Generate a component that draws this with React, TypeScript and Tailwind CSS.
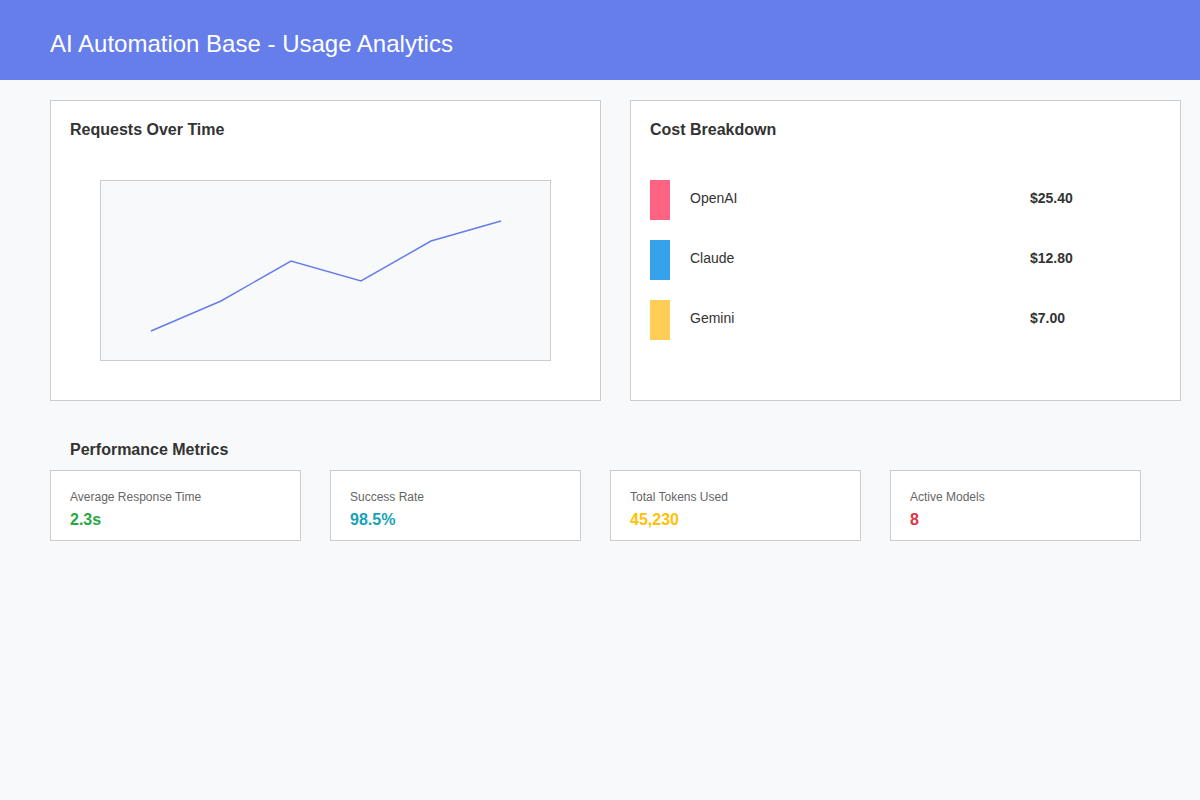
export default function App() {
    const points = [
        [50, 150],
        [120, 120],
        [190, 80],
        [260, 100],
        [330, 60],
        [400, 40],
    ]

    const costs = [
        { name: 'OpenAI', amount: '$25.40', color: 'bg-[#ff6384]' },
        { name: 'Claude', amount: '$12.80', color: 'bg-[#36a2eb]' },
        { name: 'Gemini', amount: '$7.00', color: 'bg-[#ffce56]' },
    ]

    const metrics = [
        { label: 'Average Response Time', value: '2.3s', color: 'text-[#28a745]' },
        { label: 'Success Rate', value: '98.5%', color: 'text-[#17a2b8]' },
        { label: 'Total Tokens Used', value: '45,230', color: 'text-[#ffc107]' },
        { label: 'Active Models', value: '8', color: 'text-[#dc3545]' },
    ]

    return (
        <div className="min-h-[800px] bg-[#f8f9fa] font-['Liberation_Sans',Arial,sans-serif] text-[#333]">
            <header className="h-[80px] bg-[#667eea] px-[50px] pt-[8px] flex items-center">
                <h1 className="text-[24px] text-white font-normal leading-none">AI Automation Base - Usage Analytics</h1>
            </header>

            <div className="pl-[50px] pt-[20px]">
                <div className="flex gap-[29px]">
                    <div className="w-[551px] h-[301px] bg-white border border-[#ccc] px-[19px] pt-[20px]">
                        <h2 className="text-[16px] font-bold leading-[18px]">Requests Over Time</h2>
                        <div className="mt-[41px] ml-[30px] w-[451px] h-[181px] border border-[#ccc] bg-[#f8f9fa]">
                            <svg width="449" height="179" viewBox="0 0 449 179">
                                <polyline
                                    points={points.map((p) => p.join(',')).join(' ')}
                                    fill="none"
                                    stroke="#667eea"
                                    strokeWidth="1.5"
                                />
                            </svg>
                        </div>
                    </div>

                    <div className="w-[551px] h-[301px] bg-white border border-[#ccc] px-[19px] pt-[20px]">
                        <h2 className="text-[16px] font-bold leading-[18px]">Cost Breakdown</h2>
                        <div className="mt-[41px] flex flex-col gap-[20px]">
                            {costs.map((c) => (
                                <div key={c.name} className="flex items-center h-[40px]">
                                    <div className={`w-[20px] h-[40px] ${c.color}`} />
                                    <span className="ml-[20px] mb-[4px] w-[340px] text-[14px] text-[#333]">{c.name}</span>
                                    <span className="mb-[4px] text-[14px] font-bold text-[#333]">{c.amount}</span>
                                </div>
                            ))}
                        </div>
                    </div>
                </div>

                <h2 className="mt-[40px] pl-[20px] text-[16px] font-bold leading-[18px]">Performance Metrics</h2>
                <div className="mt-[11px] flex gap-[29px]">
                    {metrics.map((m) => (
                        <div key={m.label} className="w-[251px] h-[71px] bg-white border border-[#ccc] px-[19px] pt-[19px]">
                            <p className="text-[12px] text-[#666] leading-[14px]">{m.label}</p>
                            <p className={`mt-[7px] text-[16px] font-bold leading-[18px] ${m.color}`}>{m.value}</p>
                        </div>
                    ))}
                </div>
            </div>
        </div>
    )
}
